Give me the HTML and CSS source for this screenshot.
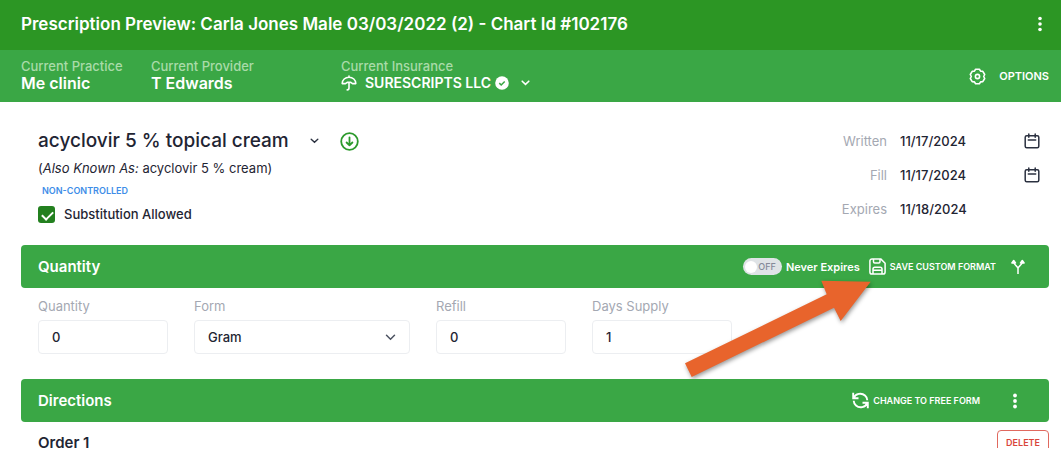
FILE: index.html
```html
<!DOCTYPE html>
<html lang="en">

<head>
    <meta charset="UTF-8">
    <meta name="viewport" content="width=device-width, initial-scale=1.0">
    <title>Prescription Preview</title>
    <link rel="stylesheet" href="styles.css">
</head>

<body>
    <header class="titlebar">
        <h1>Prescription Preview: Carla Jones Male 03/03/2022 (2) - Chart Id #102176</h1>
        <button class="icon-btn" aria-label="More">
            <svg width="4" height="16" viewBox="0 0 4 16" fill="currentColor"><circle cx="2" cy="2.5" r="1.8"/><circle cx="2" cy="8" r="1.8"/><circle cx="2" cy="13.5" r="1.8"/></svg>
        </button>
    </header>

    <div class="context">
        <div class="context-item practice">
            <span class="caption">Current Practice</span>
            <span class="value">Me clinic</span>
        </div>
        <div class="context-item provider">
            <span class="caption">Current Provider</span>
            <span class="value">T Edwards</span>
        </div>
        <div class="context-item">
            <span class="caption">Current Insurance</span>
            <button class="insurance">
                <svg width="16" height="16" viewBox="0 0 16 16" fill="none" stroke="currentColor" stroke-width="1.6" stroke-linecap="round" stroke-linejoin="round"><path d="M8 1v1M1.200 8.600C1.200 4.800 4.200 2.200 8 2.200s6.800 2.600 6.800 6.400H11.500L9.800 7.400H6.200L4.500 8.600zM8 7.600v5.500c0 1.200-.6 1.800-1.800 1.800"/></svg>
                <span>SURESCRIPTS LLC</span>
                <svg class="badge" width="14" height="14" viewBox="0 0 14 14"><circle cx="7" cy="7" r="6.800" fill="#fff"/><path d="M4.300 7.100l1.900 1.900 3.500-3.500" fill="none" stroke="#3aa745" stroke-width="1.500"/></svg>
                <svg width="9" height="6" viewBox="0 0 9 6" fill="none" stroke="currentColor" stroke-width="1.600" stroke-linecap="round"><path d="M1.200 1.200l3.300 3.200 3.300-3.200"/></svg>
            </button>
        </div>
        <button class="options">
            <svg width="17" height="17" viewBox="0 0 17 17" fill="none" stroke="currentColor" stroke-width="1.600" stroke-linejoin="round"><path d="M6.600 1.200h3.800l1.200 1.900 2.200.2 1.900 3.200-1 2 1 2-1.900 3.200-2.200.2-1.200 1.900H6.600l-1.200-1.900-2.200-.2-1.900-3.200 1-2-1-2 1.900-3.200 2.200-.2z"/><circle cx="8.500" cy="8.500" r="2.100"/></svg>
            <span>OPTIONS</span>
        </button>
    </div>

    <main>
        <section class="drug">
            <div class="drug-info">
                <div class="drug-name">
                    <h2>acyclovir 5 % topical cream</h2>
                    <button class="icon-btn" aria-label="Change drug">
                        <svg width="9" height="6" viewBox="0 0 9 6" fill="none" stroke="#2b3140" stroke-width="1.400" stroke-linecap="round"><path d="M1.200 1.200l3.300 3 3.300-3"/></svg>
                    </button>
                    <button class="icon-btn" aria-label="Download">
                        <svg width="19" height="19" viewBox="0 0 19 19" fill="none" stroke="#2c9a2c" stroke-width="1.800" stroke-linecap="round" stroke-linejoin="round"><circle cx="9.500" cy="9.500" r="8.300"/><path d="M9.500 5.300v8M6.600 10.500l2.900 2.900 2.900-2.900"/></svg>
                    </button>
                </div>
                <p class="aka">(<em>Also Known As:</em> acyclovir 5 % cream)</p>
                <p class="tag">NON-CONTROLLED</p>
                <label class="substitution"><input type="checkbox" checked>Substitution Allowed</label>
            </div>

            <div class="dates">
                <div class="date-row">
                    <label for="written">Written</label>
                    <input id="written" type="text" value="11/17/2024">
                    <button class="icon-btn" aria-label="Pick written date">
                        <svg width="16" height="16" viewBox="0 0 16 16" fill="none" stroke="#2b3140" stroke-width="1.500" stroke-linecap="round"><rect x="1.200" y="2.700" width="13.600" height="12" rx="1.500"/><path d="M4.800 1v3.200M11.200 1v3.200M4.300 7h7.400"/></svg>
                    </button>
                </div>
                <div class="date-row">
                    <label for="fill">Fill</label>
                    <input id="fill" type="text" value="11/17/2024">
                    <button class="icon-btn" aria-label="Pick fill date">
                        <svg width="16" height="16" viewBox="0 0 16 16" fill="none" stroke="#2b3140" stroke-width="1.500" stroke-linecap="round"><rect x="1.200" y="2.700" width="13.600" height="12" rx="1.500"/><path d="M4.800 1v3.200M11.200 1v3.200M4.300 7h7.400"/></svg>
                    </button>
                </div>
                <div class="date-row">
                    <label for="expires">Expires</label>
                    <input id="expires" type="text" value="11/18/2024">
                </div>
            </div>
        </section>

        <section class="panel">
            <div class="panel-head">
                <h3>Quantity</h3>
                <label class="never">
                    <span class="switch"><input type="checkbox"><span class="state">OFF</span></span>
                    Never Expires
                </label>
                <button class="action save">
                    <svg width="17" height="17" viewBox="0 0 17 17" fill="none" stroke="currentColor" stroke-width="1.500" stroke-linejoin="round"><path d="M3 .9h8.700l4.400 4.400V14a2.100 2.100 0 0 1-2.100 2.100H3A2.100 2.100 0 0 1 .9 14V3A2.100 2.100 0 0 1 3 .9z"/><path d="M4.500 1v2.700c0 .8.400 1.200 1.200 1.200h4.100c.8 0 1.200-.4 1.200-1.200V1M4 16v-5c0-1.200.6-1.800 1.800-1.800h5.400c1.200 0 1.800.6 1.800 1.800v5M4 12.300h9"/></svg>
                    <span>SAVE CUSTOM FORMAT</span>
                </button>
                <button class="icon-btn split" aria-label="Split">
                    <svg width="14" height="16" viewBox="0 0 14 16" fill="none" stroke="currentColor" stroke-width="1.500" stroke-linejoin="round"><path d="M7 15V9.500C7 7 2.700 6.500 2.700 2.500M7 9.500C7 7 11.300 6.500 11.300 2.500"/><path d="M2.700 1.500L.9 4h3.600zM11.300 1.500L9.500 4h3.600z" fill="currentColor"/></svg>
                </button>
            </div>
            <div class="fields">
                <div class="field">
                    <label for="quantity">Quantity</label>
                    <input id="quantity" type="text" value="0">
                </div>
                <div class="field">
                    <label for="form">Form</label>
                    <div class="select-wrap">
                        <select id="form"><option>Gram</option></select>
                        <svg width="11" height="7" viewBox="0 0 11 7" fill="none" stroke="#4b5160" stroke-width="1.500" stroke-linecap="round"><path d="M1.500 1.300l4 4 4-4"/></svg>
                    </div>
                </div>
                <div class="field">
                    <label for="refill">Refill</label>
                    <input id="refill" type="text" value="0">
                </div>
                <div class="field">
                    <label for="days">Days Supply</label>
                    <input id="days" type="text" value="1">
                </div>
            </div>
            <!-- pointer to the save button -->
            <svg class="arrow" width="186" height="100" viewBox="0 0 186 100"><path fill="#e8642c" d="M0 83.300L141.700 14.300 136.300.7l49.400 1L155.700 41l-6.700-13.300L6.700 97z"/></svg>
        </section>

        <section class="panel">
            <div class="panel-head">
                <h3>Directions</h3>
                <button class="action change">
                    <svg width="17" height="17" viewBox="0 0 17 17" fill="none" stroke="currentColor" stroke-width="1.900"><path d="M1.200.8v5.500h5.300M1.600 6C3.500 1.600 9.500.4 13 3.500c1.400 1.200 2.200 2.800 2.300 4.700M15.800 16.200v-5.500h-5.300M15.400 11C13.500 15.400 7.500 16.600 4 13.500 2.600 12.300 1.800 10.700 1.700 8.800"/></svg>
                    <span>CHANGE TO FREE FORM</span>
                </button>
                <button class="icon-btn more" aria-label="More">
                    <svg width="4" height="16" viewBox="0 0 4 16" fill="currentColor"><circle cx="2" cy="2.500" r="1.900"/><circle cx="2" cy="8" r="1.900"/><circle cx="2" cy="13.500" r="1.900"/></svg>
                </button>
            </div>
            <div class="order">
                <h4>Order 1</h4>
                <button class="delete">DELETE</button>
            </div>
        </section>
    </main>
</body>

</html>
```
FILE: styles.css
```css
* {
    box-sizing: border-box;
    margin: 0;
    padding: 0;
}

body {
    height: 100vh;
    overflow: hidden;
    border-bottom: 2px solid #fff;
    display: flex;
    flex-direction: column;
    background: #fff;
    color: #1f2533;
    font-family: Inter, "Liberation Sans", sans-serif;
    font-size: 13px;
    line-height: 18px;
}

button,
input,
select {
    font: inherit;
    color: inherit;
    border: 0;
    background: none;
}

button {
    cursor: pointer;
}

svg {
    display: block;
    flex: none;
}

.icon-btn {
    display: flex;
}

.titlebar {
    flex: none;
    display: flex;
    align-items: center;
    justify-content: space-between;
    height: 50px;
    padding: 0 19px 2px 21px;
    background: #2c9624;
    color: #fff;
}

.titlebar h1 {
    font-size: 17px;
    font-weight: 600;
    line-height: 24px;
}

.context {
    flex: none;
    display: flex;
    align-items: center;
    height: 52px;
    padding: 0 12px 0 21px;
    background: #3aa745;
    color: #fff;
}

.context-item {
    display: flex;
    flex-direction: column;
    padding-bottom: 3px;
}

.practice {
    width: 130px;
}

.provider {
    width: 190px;
}

.caption {
    color: #a9dba9;
    font-weight: 500;
    line-height: 16px;
}

.value {
    font-size: 16px;
    font-weight: 600;
}

.insurance {
    display: flex;
    align-items: center;
    font-size: 14px;
    font-weight: 600;
}

.insurance span {
    margin-left: 8px;
}

.badge {
    margin: 0 12px 0 4px;
}

.options {
    display: flex;
    align-items: center;
    gap: 13px;
    margin-left: auto;
    font-size: 11px;
    font-weight: 600;
}

main {
    flex: 1;
    min-height: 0;
    overflow: hidden;
    padding: 22px 12px 0 21px;
}

.drug {
    display: flex;
    justify-content: space-between;
    height: 121px;
    padding-left: 17px;
}

.drug-name {
    display: flex;
    align-items: center;
    gap: 21px;
    height: 34px;
}

.drug-name h2 {
    font-size: 19px;
    font-weight: 500;
}

.aka {
    padding-top: 1px;
}

.tag {
    padding: 5px 0 0 4px;
    color: #3e8de8;
    font-size: 9px;
    font-weight: 600;
}

.substitution {
    display: flex;
    align-items: center;
    gap: 9px;
    margin-top: 5px;
    font-weight: 500;
}

.substitution input {
    appearance: none;
    width: 17px;
    height: 17px;
    border-radius: 3px;
    background: #23801f;
}

.substitution input:checked::before {
    content: "";
    display: block;
    width: 9px;
    height: 5px;
    margin: 5px 4px;
    border-left: 2px solid #fff;
    border-bottom: 2px solid #fff;
    transform: rotate(-45deg);
}

.dates {
    width: 210px;
}

.date-row {
    display: grid;
    grid-template-columns: 48px 1fr 16px;
    gap: 13px;
    align-items: center;
    height: 34px;
    padding-right: 9px;
}

.date-row label {
    justify-self: end;
    color: #a4a8b2;
}

.date-row input {
    width: 100%;
    font-weight: 500;
}

.panel {
    position: relative;
}

.panel-head {
    display: flex;
    align-items: center;
    height: 43px;
    padding: 0 24px 0 17px;
    border-radius: 4px;
    background: #3aa745;
    color: #fff;
}

.panel-head h3 {
    margin-right: auto;
    font-size: 15px;
    font-weight: 600;
}

.never {
    display: flex;
    align-items: center;
    gap: 4px;
    font-size: 11px;
    font-weight: 600;
}

.switch {
    display: flex;
    align-items: center;
    justify-content: space-between;
    width: 39px;
    height: 17px;
    padding: 0 6px 0 2px;
    border-radius: 9px;
    background: #dfe3e6;
}

.switch input {
    appearance: none;
    width: 12px;
    height: 12px;
    border-radius: 50%;
    background: #fff;
}

.state {
    color: #858a99;
    font-size: 9px;
    font-weight: 500;
}

.action {
    display: flex;
    align-items: center;
    gap: 4px;
    font-size: 9px;
    font-weight: 600;
}

.save {
    margin: 0 15px 0 9px;
}

.change {
    margin-right: 33px;
}

.more {
    margin-right: 8px;
}

.fields {
    display: grid;
    grid-template-columns: 130fr 216fr 130fr 140fr 274fr;
    gap: 26px;
    padding: 9px 17px 25px;
}

.field label {
    display: block;
    margin-bottom: 5px;
    color: #a4a8b2;
}

.field input,
.field select {
    display: block;
    appearance: none;
    width: 100%;
    height: 34px;
    padding: 0 13px;
    border: 1px solid #eceef1;
    border-radius: 4px;
    font-weight: 500;
}

.select-wrap {
    display: grid;
    align-items: center;
}

.select-wrap select,
.select-wrap svg {
    grid-area: 1 / 1;
}

.select-wrap svg {
    justify-self: end;
    margin-right: 14px;
    pointer-events: none;
}

.arrow {
    position: absolute;
    top: 35px;
    right: 178px;
    overflow: visible;
    pointer-events: none;
    filter: drop-shadow(1px 2px 2px #0006);
}

.order {
    display: flex;
    justify-content: space-between;
    align-items: center;
    padding: 8px 0 0 17px;
}

.order h4 {
    font-size: 15px;
    font-weight: 600;
}

.delete {
    height: 26px;
    padding: 0 8px;
    border: 1px solid #e0695f;
    border-radius: 4px;
    color: #d9453a;
    font-size: 9px;
    font-weight: 600;
}
```
